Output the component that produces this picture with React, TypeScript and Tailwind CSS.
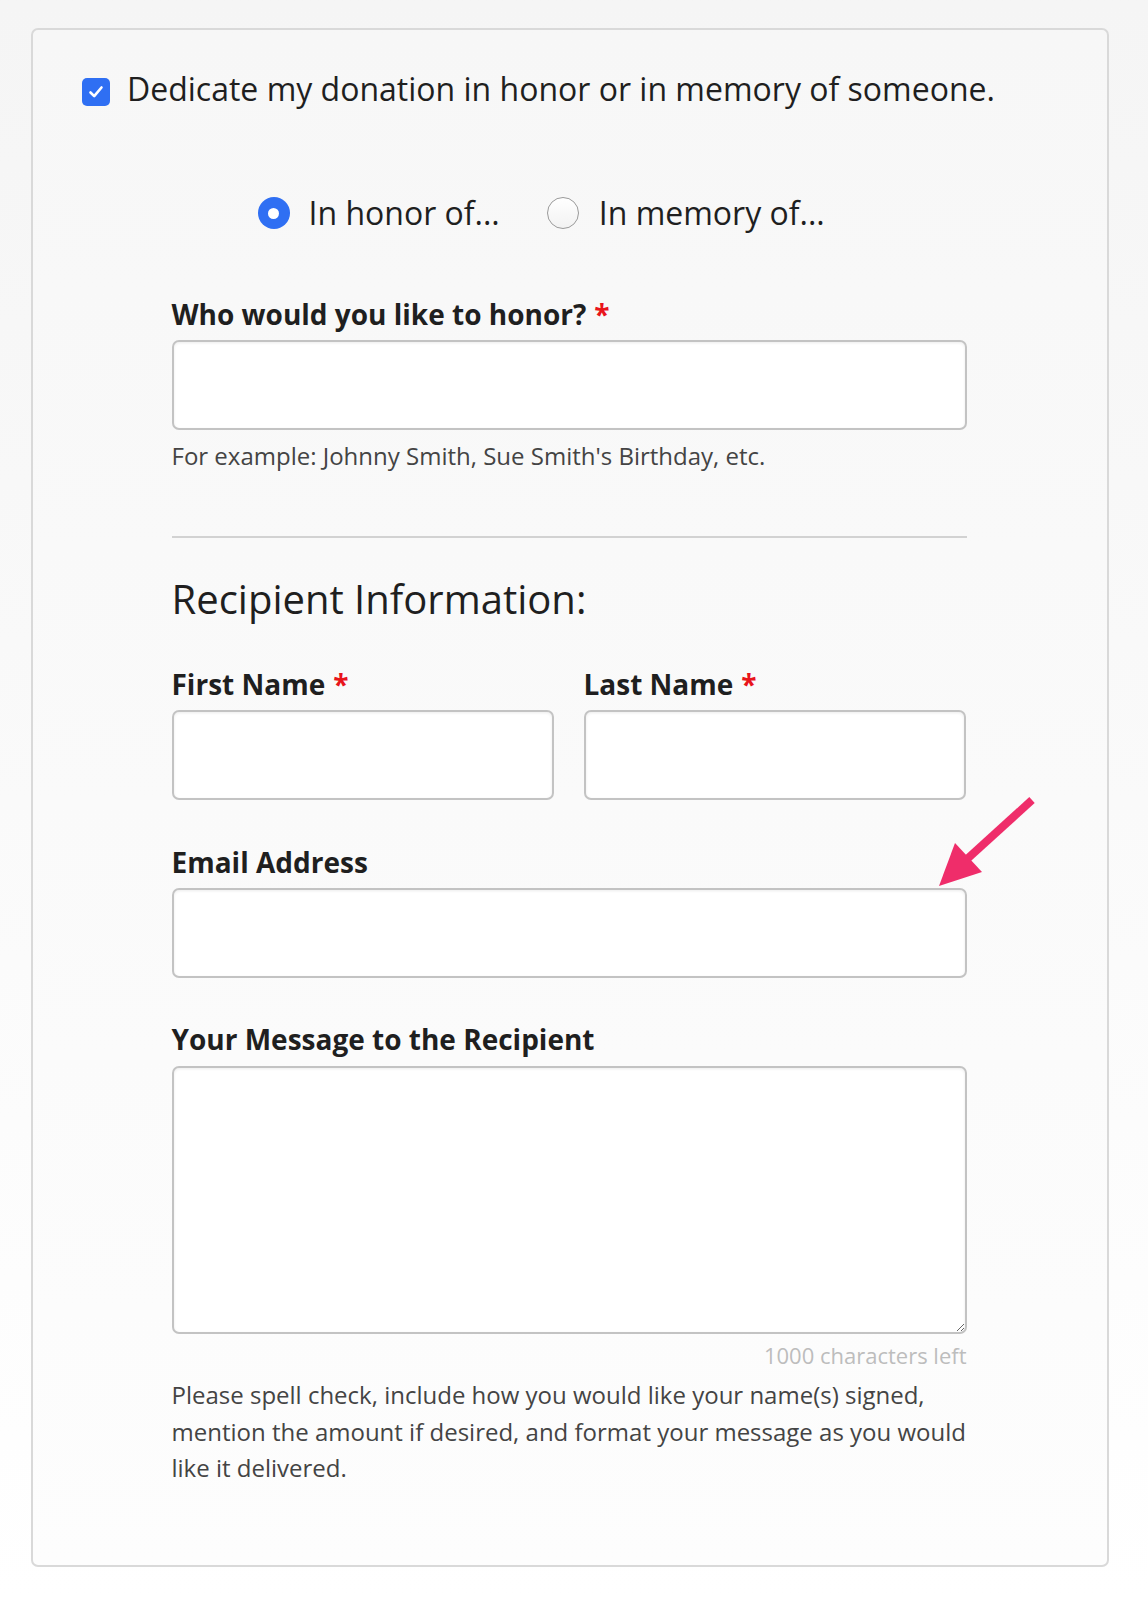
import React from "react";

const font = { fontFamily: '"Open Sans", "Noto Sans", sans-serif' };

function Label({ children, required }: { children: React.ReactNode; required?: boolean }) {
  return (
    <div className="text-[28px] leading-[38px] font-bold text-[#1f1f1f]">
      {children}
      {required && <span className="text-[#e8141b] ml-[8px]">*</span>}
    </div>
  );
}

function TextBox({ className = "" }: { className?: string }) {
  return (
    <input
      type="text"
      className={`block h-[90px] mt-[7px] rounded-[7px] border-2 border-[#c3c3c3] bg-white shadow-[inset_0_1px_3px_rgba(0,0,0,0.08)] outline-none ${className}`}
    />
  );
}

export default function App() {
  return (
    <div
      className="relative min-h-[1598px] w-[1148px] bg-linear-to-b from-[#f5f5f5] to-[#ffffff] pt-[28px]"
      style={font}
    >
      <div className="ml-[31px] w-[1078px] h-[1539px] rounded-[7px] border-2 border-[#d9d9d9] bg-linear-to-b from-[#f7f7f7] to-[#fdfdfd]">
        {/* checkbox row */}
        <div className="flex items-center pl-[49px] pt-[42px] h-[82px]">
          <span className="flex h-[28px] w-[28px] items-center justify-center rounded-[5px] bg-[#2f6ff3]">
            <svg width="18" height="18" viewBox="0 0 18 18" fill="none">
              <path d="M3.5 9.5 L7.2 13.2 L14.5 4.5" stroke="white" strokeWidth="2.6" strokeLinecap="round" strokeLinejoin="round" />
            </svg>
          </span>
          <span className="ml-[17px] -mt-[6px] text-[32px] leading-[40px] text-[#1f1f1f]">
            Dedicate my donation in honor or in memory of someone.
          </span>
        </div>

        <div className="mx-auto w-[795px] -translate-x-[1px]">
          {/* radios */}
          <div className="mt-[81px] flex h-[40px] items-center pl-[86px]">
            <span className="flex h-[32px] w-[32px] items-center justify-center rounded-full bg-[#2f6ff3]">
              <span className="h-[11px] w-[11px] rounded-full bg-white" />
            </span>
            <span className="ml-[19px] text-[32px] leading-[40px] text-[#1f1f1f]">In honor of...</span>
            <span className="ml-[47px] h-[32px] w-[32px] rounded-full border border-[#9a9a9a] bg-linear-to-b from-[#ffffff] to-[#f2f2f2]" />
            <span className="ml-[20px] text-[32px] leading-[40px] text-[#1f1f1f]">In memory of...</span>
          </div>

          <div className="mt-[62px]">
            <Label required>Who would you like to honor?</Label>
            <TextBox className="w-[795px]" />
            <div className="mt-[11px] text-[24px] leading-[30px] text-[#444444]">
              For example: Johnny Smith, Sue Smith's Birthday, etc.
            </div>
          </div>

          <div className="mt-[65px] h-[2px] bg-[#d2d2d2]" />

          <div className="mt-[36px] text-[40px] leading-[50px] text-[#1f1f1f]">Recipient Information:</div>

          <div className="mt-[41px] flex gap-[30px]">
            <div className="w-[382px]">
              <Label required>First Name</Label>
              <TextBox className="w-[382px]" />
            </div>
            <div className="w-[382px]">
              <Label required>Last Name</Label>
              <TextBox className="w-[382px]" />
            </div>
          </div>

          <div className="mt-[43px]">
            <Label>Email Address</Label>
            <TextBox className="w-[795px]" />
          </div>

          <div className="mt-[42px]">
            <Label>Your Message to the Recipient</Label>
            <textarea className="mt-[8px] block h-[268px] w-[795px] rounded-[7px] border-2 border-[#c3c3c3] bg-white shadow-[inset_0_1px_3px_rgba(0,0,0,0.08)] outline-none" />
            <div className="mt-[6px] text-right text-[22px] leading-[30px] text-[#bdbdbd]">1000 characters left</div>
            <div className="mt-[7px] text-[24px] leading-[36.5px] text-[#444444]">
              Please spell check, include how you would like your name(s) signed, mention the amount if desired, and format your message as you would like it delivered.
            </div>
          </div>
        </div>
      </div>

      {/* annotation arrow */}
      <svg className="absolute left-[930px] top-[790px]" width="110" height="105" viewBox="0 0 110 105">
        <line x1="102" y1="10" x2="36" y2="70" stroke="#ef2d6a" strokeWidth="8" strokeLinecap="butt" />
        <polygon points="9,96 25,53 52,82" fill="#ef2d6a" />
      </svg>
    </div>
  );
}
